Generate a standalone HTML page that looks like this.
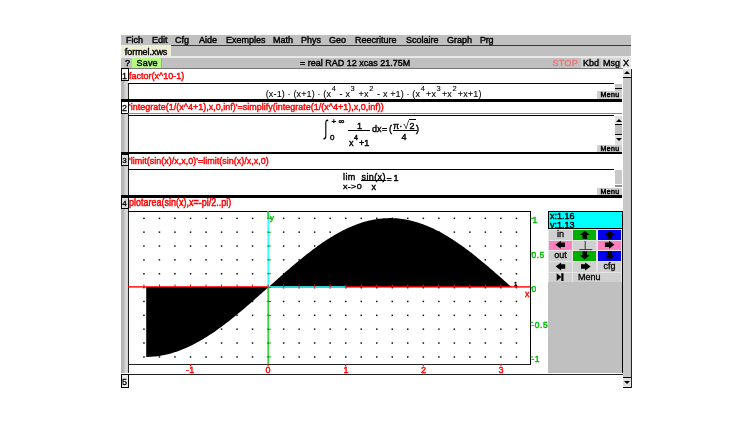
<!DOCTYPE html>
<html><head><meta charset="utf-8"><title>xcas</title>
<style>
html,body{margin:0;padding:0;background:#fff;}
body{width:752px;height:423px;position:relative;overflow:hidden;filter:blur(0.3px);font-family:"Liberation Sans",sans-serif;font-size:9px;line-height:10px;color:#000;}
.abs{position:absolute;}
.t{position:absolute;white-space:nowrap;line-height:10px;transform:translateY(0.5px) scaleY(1.03);transform-origin:0 50%;-webkit-text-stroke:0.42px;}
.r{color:#f00;}
.g{color:#0b0;}
.b{position:absolute;background:#000;}
.gr{position:absolute;background:#c0c0c0;}
.lg{position:absolute;background:#d4d4d4;}
.w{position:absolute;background:#fff;}
.num{position:absolute;left:121px;width:6px;border:1px solid #000;background:#fff;font-size:9px;text-align:center;line-height:12px;-webkit-text-stroke:0.3px;overflow:hidden;text-indent:-1px}
.menu{position:absolute;left:597px;width:25px;height:8px;background:#d0d0d0;font-size:7px;line-height:8.5px;text-align:center;-webkit-text-stroke:0.45px;letter-spacing:0.4px;text-indent:1px}
.btn{position:absolute;height:9.5px;width:23px;text-align:center;line-height:9.5px;font-size:9px;-webkit-text-stroke:0.3px;}
.n{transform:none;}
.m{font-size:9px;}
sup{font-size:7.5px;line-height:0;vertical-align:6px;margin:0 1px 0 0.5px;}
.m{-webkit-text-stroke:0.1px;}
</style></head><body>
<!-- window background -->
<div class="gr" style="left:121px;top:35px;width:510px;height:353px;background:#fff"></div>
<!-- menubar -->
<div class="gr" style="left:121px;top:35px;width:510px;height:33px"></div>
<div class="t n" style="left:126px;top:35px">Fich</div>
<div class="t n" style="left:152px;top:35px">Edit</div>
<div class="t n" style="left:175px;top:35px">Cfg</div>
<div class="t n" style="left:199px;top:35px">Aide</div>
<div class="t n" style="left:226px;top:35px">Exemples</div>
<div class="t n" style="left:273px;top:35px">Math</div>
<div class="t n" style="left:301px;top:35px">Phys</div>
<div class="t n" style="left:329px;top:35px">Geo</div>
<div class="t n" style="left:355px;top:35px">Reecriture</div>
<div class="t n" style="left:406px;top:35px">Scolaire</div>
<div class="t n" style="left:447px;top:35px">Graph</div>
<div class="t n" style="left:480px;top:35px;letter-spacing:-0.3px">Prg</div>
<div class="b" style="left:171px;top:45px;width:460px;height:1.3px;background:#383838"></div>
<!-- tab -->
<div class="abs" style="left:121px;top:45px;width:50px;height:12px;background:#eeeed4"></div>
<div class="t n" style="left:124.8px;top:46.8px;letter-spacing:-0.05px">formel.xws</div>
<div class="abs" style="left:121px;top:56.3px;width:510px;height:1.4px;background:#e8e8e8"></div>
<!-- toolbar -->
<div class="t n" style="left:125px;top:57.8px">?</div>
<div class="abs" style="left:131.5px;top:58px;width:30px;height:10px;background:#a9a4b0"></div><div class="abs" style="left:132px;top:58px;width:29px;height:10px;background:#b4fa80"></div>
<div class="t n" style="left:136.5px;top:57.8px;letter-spacing:0.2px">Save</div>
<div class="t n" style="left:300px;top:57.8px">= real RAD 12 xcas 21.75M</div>
<div class="t n" style="left:552.5px;top:57.8px;color:#ee7777;letter-spacing:0.3px">STOP</div>
<div class="lg" style="left:581px;top:58px;width:18px;height:10px"></div>
<div class="t n" style="left:583px;top:57.8px">Kbd</div>
<div class="lg" style="left:601px;top:58px;width:19px;height:10px"></div>
<div class="t n" style="left:603px;top:57.8px">Msg</div>
<div class="lg" style="left:621px;top:58px;width:10px;height:10px;background:#e8e8e8"></div>
<div class="t n" style="left:623px;top:57.8px">X</div>
<div class="b" style="left:121px;top:68px;width:502px;height:1px;background:#777"></div>

<!-- left gray strip -->
<div class="gr" style="left:121px;top:69px;width:7px;height:304px;background:linear-gradient(to right,#b4b4b4 0,#b8b8b8 2.5px,#d6d6d6 4.5px,#d6d6d6 7px)"></div>
<div class="b" style="left:127.6px;top:83px;width:1.3px;height:290px;background:#222"></div>

<!-- main scrollbar -->
<div class="gr" style="left:623px;top:69px;width:8px;height:319px;background:#c8c8c8"></div>
<div class="b" style="left:630.5px;top:69px;width:1px;height:319px;background:#222"></div>
<div class="abs" style="left:623px;top:69px;width:8px;height:8px;background:#e0e0e0"></div>
<div class="abs" style="left:624px;top:71px;width:0;height:0;border-left:3px solid transparent;border-right:3px solid transparent;border-bottom:3px solid #000"></div>
<div class="b" style="left:623px;top:77px;width:8px;height:1px"></div>
<div class="abs" style="left:623px;top:378px;width:8px;height:10px;background:#e0e0e0"></div>
<div class="b" style="left:623px;top:377px;width:8px;height:1px"></div>
<div class="abs" style="left:624px;top:381px;width:0;height:0;border-left:3px solid transparent;border-right:3px solid transparent;border-top:3px solid #000"></div>
<div class="b" style="left:623px;top:387px;width:8px;height:1px"></div>

<!-- row 1 -->
<div class="num" style="top:68px;height:10.5px;line-height:14px">1</div>
<div class="t r" style="left:129px;top:70px">factor(x^10-1)</div>
<div class="b" style="left:128px;top:83px;width:486px;height:1px"></div>
<div class="abs" style="left:129px;top:84px;width:486px;height:15px;overflow:hidden"><div class="t n m" id="f1" style="left:136.7px;top:5.4px;letter-spacing:0.15px">(x-1) · (x+1) · (x<sup>4</sup> - x<sup>3</sup> +x<sup>2</sup> - x +1) · (x<sup>4</sup>+x<sup>3</sup>+x<sup>2</sup>+x+1)</div></div>
<div class="gr" style="left:615px;top:84px;width:7px;height:7px;background:#c8c8c8"></div>
<div class="b" style="left:615px;top:87.7px;width:7px;height:1.4px"></div>
<div class="menu" style="top:91.3px">Menu</div>
<div class="b" style="left:121px;top:99px;width:501px;height:3px"></div>

<!-- row 2 -->
<div class="num" style="top:101px;height:10.5px">2</div>
<div class="t r" style="left:129px;top:101.3px">'integrate(1/(x^4+1),x,0,inf)'=simplify(integrate(1/(x^4+1),x,0,inf))</div>
<div class="b" style="left:128px;top:113px;width:494px;height:1px;background:#888"></div>
<div class="b" style="left:128px;top:115px;width:486px;height:1px"></div>
<!-- formula 2 -->
<div class="t n" style="left:324px;top:116px;font-size:21px;line-height:24px;transform:scaleX(0.62);transform-origin:0 0;-webkit-text-stroke:0">∫</div>
<div class="t n" style="left:331.5px;top:117.3px;font-size:8px">+ ∞</div>
<div class="t n" style="left:330px;top:133px;font-size:8px">0</div>
<div class="t n" style="left:357px;top:121px">1</div>
<div class="b" style="left:348px;top:130px;width:22px;height:1px"></div>
<div class="t n" style="left:349px;top:137.5px">x<sup style="vertical-align:6.3px;font-size:7px">4</sup>+1</div>
<div class="t n" style="left:372px;top:124px">dx</div>
<div class="t n" style="left:382px;top:124px">=</div>
<div class="t n" style="left:389px;top:124px">(</div>
<div class="t n" style="left:393px;top:121px">π·</div>
<div class="t n" style="left:403px;top:119px;font-size:11px;line-height:12px;-webkit-text-stroke:0">√</div>
<div class="t n" style="left:409.5px;top:121px">2</div>
<div class="b" style="left:408.5px;top:119px;width:7px;height:1px"></div>
<div class="b" style="left:393px;top:130px;width:23.5px;height:1px"></div>
<div class="t n" style="left:401.5px;top:132px">4</div>
<div class="t n" style="left:416px;top:124px">)</div>
<!-- row2 scrollbar -->
<div class="gr" style="left:615px;top:116px;width:7px;height:29px;background:#e0e0e0"></div>
<div class="abs" style="left:616px;top:119px;width:0;height:0;border-left:3px solid transparent;border-right:3px solid transparent;border-bottom:3px solid #000"></div>
<div class="b" style="left:615px;top:124px;width:7px;height:1px"></div>
<div class="gr" style="left:615px;top:125px;width:7px;height:9px"></div>
<div class="b" style="left:615px;top:134px;width:7px;height:1px"></div>
<div class="abs" style="left:616px;top:138px;width:0;height:0;border-left:3px solid transparent;border-right:3px solid transparent;border-top:3px solid #000"></div>
<div class="menu" style="top:145px">Menu</div>
<div class="b" style="left:121px;top:152px;width:501px;height:2px"></div>

<!-- row 3 -->
<div class="num" style="top:153.5px;height:10.5px;background:#ddd;font-size:8px">3</div>
<div class="t r" style="left:129px;top:154.6px">'limit(sin(x)/x,x,0)'=limit(sin(x)/x,x,0)</div>
<div class="b" style="left:128px;top:169px;width:486px;height:1px"></div>
<div class="t n" style="left:343px;top:171.5px;letter-spacing:0.4px">lim</div>
<div class="t n" style="left:343px;top:181px;font-size:9px;transform:scaleY(0.85);letter-spacing:0.3px">x-&gt;0</div>
<div class="t n" style="left:361.5px;top:171.5px;letter-spacing:0.4px">sin(x)</div>
<div class="b" style="left:361px;top:179.5px;width:24.5px;height:1px"></div>
<div class="t n" style="left:371.5px;top:181.5px">x</div>
<div class="t n" style="left:386.5px;top:174px">=</div>
<div class="t n" style="left:393.5px;top:173px">1</div>
<div class="gr" style="left:615px;top:170px;width:7px;height:14px;background:#c8c8c8"></div><div class="gr" style="left:615px;top:184.5px;width:7px;height:2px;background:#909090"></div>
<div class="menu" style="top:188px">Menu</div>
<div class="b" style="left:121px;top:195px;width:501px;height:3px"></div>

<!-- row 4 -->
<div class="num" style="top:196.5px;height:10.5px;background:#ddd;font-size:8px">4</div>
<div class="t r" style="left:129px;top:198.3px;transform:scaleY(1.13)">plotarea(sin(x),x=-pi/2..pi)</div>
<div class="b" style="left:128px;top:211px;width:403px;height:1px"></div>
<div class="b" style="left:530px;top:211px;width:1px;height:153px"></div>
<div class="b" style="left:128px;top:363.5px;width:403px;height:1.2px;background:#222"></div>
<svg class="abs" style="left:0;top:0" width="752" height="423" viewBox="0 0 752 423">
<g fill="#111"><rect x="143.2" y="356.2" width="1.5" height="1.5"/><rect x="143.2" y="342.3" width="1.5" height="1.5"/><rect x="143.2" y="328.4" width="1.5" height="1.5"/><rect x="143.2" y="314.6" width="1.5" height="1.5"/><rect x="143.2" y="300.7" width="1.5" height="1.5"/><rect x="143.2" y="286.9" width="1.5" height="1.5"/><rect x="143.2" y="273.0" width="1.5" height="1.5"/><rect x="143.2" y="259.1" width="1.5" height="1.5"/><rect x="143.2" y="245.3" width="1.5" height="1.5"/><rect x="143.2" y="231.4" width="1.5" height="1.5"/><rect x="143.2" y="217.6" width="1.5" height="1.5"/><rect x="158.7" y="356.2" width="1.5" height="1.5"/><rect x="158.7" y="342.3" width="1.5" height="1.5"/><rect x="158.7" y="328.4" width="1.5" height="1.5"/><rect x="158.7" y="314.6" width="1.5" height="1.5"/><rect x="158.7" y="300.7" width="1.5" height="1.5"/><rect x="158.7" y="286.9" width="1.5" height="1.5"/><rect x="158.7" y="273.0" width="1.5" height="1.5"/><rect x="158.7" y="259.1" width="1.5" height="1.5"/><rect x="158.7" y="245.3" width="1.5" height="1.5"/><rect x="158.7" y="231.4" width="1.5" height="1.5"/><rect x="158.7" y="217.6" width="1.5" height="1.5"/><rect x="174.2" y="356.2" width="1.5" height="1.5"/><rect x="174.2" y="342.3" width="1.5" height="1.5"/><rect x="174.2" y="328.4" width="1.5" height="1.5"/><rect x="174.2" y="314.6" width="1.5" height="1.5"/><rect x="174.2" y="300.7" width="1.5" height="1.5"/><rect x="174.2" y="286.9" width="1.5" height="1.5"/><rect x="174.2" y="273.0" width="1.5" height="1.5"/><rect x="174.2" y="259.1" width="1.5" height="1.5"/><rect x="174.2" y="245.3" width="1.5" height="1.5"/><rect x="174.2" y="231.4" width="1.5" height="1.5"/><rect x="174.2" y="217.6" width="1.5" height="1.5"/><rect x="189.8" y="356.2" width="1.5" height="1.5"/><rect x="189.8" y="342.3" width="1.5" height="1.5"/><rect x="189.8" y="328.4" width="1.5" height="1.5"/><rect x="189.8" y="314.6" width="1.5" height="1.5"/><rect x="189.8" y="300.7" width="1.5" height="1.5"/><rect x="189.8" y="286.9" width="1.5" height="1.5"/><rect x="189.8" y="273.0" width="1.5" height="1.5"/><rect x="189.8" y="259.1" width="1.5" height="1.5"/><rect x="189.8" y="245.3" width="1.5" height="1.5"/><rect x="189.8" y="231.4" width="1.5" height="1.5"/><rect x="189.8" y="217.6" width="1.5" height="1.5"/><rect x="205.3" y="356.2" width="1.5" height="1.5"/><rect x="205.3" y="342.3" width="1.5" height="1.5"/><rect x="205.3" y="328.4" width="1.5" height="1.5"/><rect x="205.3" y="314.6" width="1.5" height="1.5"/><rect x="205.3" y="300.7" width="1.5" height="1.5"/><rect x="205.3" y="286.9" width="1.5" height="1.5"/><rect x="205.3" y="273.0" width="1.5" height="1.5"/><rect x="205.3" y="259.1" width="1.5" height="1.5"/><rect x="205.3" y="245.3" width="1.5" height="1.5"/><rect x="205.3" y="231.4" width="1.5" height="1.5"/><rect x="205.3" y="217.6" width="1.5" height="1.5"/><rect x="220.8" y="356.2" width="1.5" height="1.5"/><rect x="220.8" y="342.3" width="1.5" height="1.5"/><rect x="220.8" y="328.4" width="1.5" height="1.5"/><rect x="220.8" y="314.6" width="1.5" height="1.5"/><rect x="220.8" y="300.7" width="1.5" height="1.5"/><rect x="220.8" y="286.9" width="1.5" height="1.5"/><rect x="220.8" y="273.0" width="1.5" height="1.5"/><rect x="220.8" y="259.1" width="1.5" height="1.5"/><rect x="220.8" y="245.3" width="1.5" height="1.5"/><rect x="220.8" y="231.4" width="1.5" height="1.5"/><rect x="220.8" y="217.6" width="1.5" height="1.5"/><rect x="236.3" y="356.2" width="1.5" height="1.5"/><rect x="236.3" y="342.3" width="1.5" height="1.5"/><rect x="236.3" y="328.4" width="1.5" height="1.5"/><rect x="236.3" y="314.6" width="1.5" height="1.5"/><rect x="236.3" y="300.7" width="1.5" height="1.5"/><rect x="236.3" y="286.9" width="1.5" height="1.5"/><rect x="236.3" y="273.0" width="1.5" height="1.5"/><rect x="236.3" y="259.1" width="1.5" height="1.5"/><rect x="236.3" y="245.3" width="1.5" height="1.5"/><rect x="236.3" y="231.4" width="1.5" height="1.5"/><rect x="236.3" y="217.6" width="1.5" height="1.5"/><rect x="251.8" y="356.2" width="1.5" height="1.5"/><rect x="251.8" y="342.3" width="1.5" height="1.5"/><rect x="251.8" y="328.4" width="1.5" height="1.5"/><rect x="251.8" y="314.6" width="1.5" height="1.5"/><rect x="251.8" y="300.7" width="1.5" height="1.5"/><rect x="251.8" y="286.9" width="1.5" height="1.5"/><rect x="251.8" y="273.0" width="1.5" height="1.5"/><rect x="251.8" y="259.1" width="1.5" height="1.5"/><rect x="251.8" y="245.3" width="1.5" height="1.5"/><rect x="251.8" y="231.4" width="1.5" height="1.5"/><rect x="251.8" y="217.6" width="1.5" height="1.5"/><rect x="267.4" y="356.2" width="1.5" height="1.5"/><rect x="267.4" y="342.3" width="1.5" height="1.5"/><rect x="267.4" y="328.4" width="1.5" height="1.5"/><rect x="267.4" y="314.6" width="1.5" height="1.5"/><rect x="267.4" y="300.7" width="1.5" height="1.5"/><rect x="267.4" y="286.9" width="1.5" height="1.5"/><rect x="267.4" y="273.0" width="1.5" height="1.5"/><rect x="267.4" y="259.1" width="1.5" height="1.5"/><rect x="267.4" y="245.3" width="1.5" height="1.5"/><rect x="267.4" y="231.4" width="1.5" height="1.5"/><rect x="267.4" y="217.6" width="1.5" height="1.5"/><rect x="282.9" y="356.2" width="1.5" height="1.5"/><rect x="282.9" y="342.3" width="1.5" height="1.5"/><rect x="282.9" y="328.4" width="1.5" height="1.5"/><rect x="282.9" y="314.6" width="1.5" height="1.5"/><rect x="282.9" y="300.7" width="1.5" height="1.5"/><rect x="282.9" y="286.9" width="1.5" height="1.5"/><rect x="282.9" y="273.0" width="1.5" height="1.5"/><rect x="282.9" y="259.1" width="1.5" height="1.5"/><rect x="282.9" y="245.3" width="1.5" height="1.5"/><rect x="282.9" y="231.4" width="1.5" height="1.5"/><rect x="282.9" y="217.6" width="1.5" height="1.5"/><rect x="298.4" y="356.2" width="1.5" height="1.5"/><rect x="298.4" y="342.3" width="1.5" height="1.5"/><rect x="298.4" y="328.4" width="1.5" height="1.5"/><rect x="298.4" y="314.6" width="1.5" height="1.5"/><rect x="298.4" y="300.7" width="1.5" height="1.5"/><rect x="298.4" y="286.9" width="1.5" height="1.5"/><rect x="298.4" y="273.0" width="1.5" height="1.5"/><rect x="298.4" y="259.1" width="1.5" height="1.5"/><rect x="298.4" y="245.3" width="1.5" height="1.5"/><rect x="298.4" y="231.4" width="1.5" height="1.5"/><rect x="298.4" y="217.6" width="1.5" height="1.5"/><rect x="313.9" y="356.2" width="1.5" height="1.5"/><rect x="313.9" y="342.3" width="1.5" height="1.5"/><rect x="313.9" y="328.4" width="1.5" height="1.5"/><rect x="313.9" y="314.6" width="1.5" height="1.5"/><rect x="313.9" y="300.7" width="1.5" height="1.5"/><rect x="313.9" y="286.9" width="1.5" height="1.5"/><rect x="313.9" y="273.0" width="1.5" height="1.5"/><rect x="313.9" y="259.1" width="1.5" height="1.5"/><rect x="313.9" y="245.3" width="1.5" height="1.5"/><rect x="313.9" y="231.4" width="1.5" height="1.5"/><rect x="313.9" y="217.6" width="1.5" height="1.5"/><rect x="329.4" y="356.2" width="1.5" height="1.5"/><rect x="329.4" y="342.3" width="1.5" height="1.5"/><rect x="329.4" y="328.4" width="1.5" height="1.5"/><rect x="329.4" y="314.6" width="1.5" height="1.5"/><rect x="329.4" y="300.7" width="1.5" height="1.5"/><rect x="329.4" y="286.9" width="1.5" height="1.5"/><rect x="329.4" y="273.0" width="1.5" height="1.5"/><rect x="329.4" y="259.1" width="1.5" height="1.5"/><rect x="329.4" y="245.3" width="1.5" height="1.5"/><rect x="329.4" y="231.4" width="1.5" height="1.5"/><rect x="329.4" y="217.6" width="1.5" height="1.5"/><rect x="345.0" y="356.2" width="1.5" height="1.5"/><rect x="345.0" y="342.3" width="1.5" height="1.5"/><rect x="345.0" y="328.4" width="1.5" height="1.5"/><rect x="345.0" y="314.6" width="1.5" height="1.5"/><rect x="345.0" y="300.7" width="1.5" height="1.5"/><rect x="345.0" y="286.9" width="1.5" height="1.5"/><rect x="345.0" y="273.0" width="1.5" height="1.5"/><rect x="345.0" y="259.1" width="1.5" height="1.5"/><rect x="345.0" y="245.3" width="1.5" height="1.5"/><rect x="345.0" y="231.4" width="1.5" height="1.5"/><rect x="345.0" y="217.6" width="1.5" height="1.5"/><rect x="360.5" y="356.2" width="1.5" height="1.5"/><rect x="360.5" y="342.3" width="1.5" height="1.5"/><rect x="360.5" y="328.4" width="1.5" height="1.5"/><rect x="360.5" y="314.6" width="1.5" height="1.5"/><rect x="360.5" y="300.7" width="1.5" height="1.5"/><rect x="360.5" y="286.9" width="1.5" height="1.5"/><rect x="360.5" y="273.0" width="1.5" height="1.5"/><rect x="360.5" y="259.1" width="1.5" height="1.5"/><rect x="360.5" y="245.3" width="1.5" height="1.5"/><rect x="360.5" y="231.4" width="1.5" height="1.5"/><rect x="360.5" y="217.6" width="1.5" height="1.5"/><rect x="376.0" y="356.2" width="1.5" height="1.5"/><rect x="376.0" y="342.3" width="1.5" height="1.5"/><rect x="376.0" y="328.4" width="1.5" height="1.5"/><rect x="376.0" y="314.6" width="1.5" height="1.5"/><rect x="376.0" y="300.7" width="1.5" height="1.5"/><rect x="376.0" y="286.9" width="1.5" height="1.5"/><rect x="376.0" y="273.0" width="1.5" height="1.5"/><rect x="376.0" y="259.1" width="1.5" height="1.5"/><rect x="376.0" y="245.3" width="1.5" height="1.5"/><rect x="376.0" y="231.4" width="1.5" height="1.5"/><rect x="376.0" y="217.6" width="1.5" height="1.5"/><rect x="391.5" y="356.2" width="1.5" height="1.5"/><rect x="391.5" y="342.3" width="1.5" height="1.5"/><rect x="391.5" y="328.4" width="1.5" height="1.5"/><rect x="391.5" y="314.6" width="1.5" height="1.5"/><rect x="391.5" y="300.7" width="1.5" height="1.5"/><rect x="391.5" y="286.9" width="1.5" height="1.5"/><rect x="391.5" y="273.0" width="1.5" height="1.5"/><rect x="391.5" y="259.1" width="1.5" height="1.5"/><rect x="391.5" y="245.3" width="1.5" height="1.5"/><rect x="391.5" y="231.4" width="1.5" height="1.5"/><rect x="391.5" y="217.6" width="1.5" height="1.5"/><rect x="407.0" y="356.2" width="1.5" height="1.5"/><rect x="407.0" y="342.3" width="1.5" height="1.5"/><rect x="407.0" y="328.4" width="1.5" height="1.5"/><rect x="407.0" y="314.6" width="1.5" height="1.5"/><rect x="407.0" y="300.7" width="1.5" height="1.5"/><rect x="407.0" y="286.9" width="1.5" height="1.5"/><rect x="407.0" y="273.0" width="1.5" height="1.5"/><rect x="407.0" y="259.1" width="1.5" height="1.5"/><rect x="407.0" y="245.3" width="1.5" height="1.5"/><rect x="407.0" y="231.4" width="1.5" height="1.5"/><rect x="407.0" y="217.6" width="1.5" height="1.5"/><rect x="422.6" y="356.2" width="1.5" height="1.5"/><rect x="422.6" y="342.3" width="1.5" height="1.5"/><rect x="422.6" y="328.4" width="1.5" height="1.5"/><rect x="422.6" y="314.6" width="1.5" height="1.5"/><rect x="422.6" y="300.7" width="1.5" height="1.5"/><rect x="422.6" y="286.9" width="1.5" height="1.5"/><rect x="422.6" y="273.0" width="1.5" height="1.5"/><rect x="422.6" y="259.1" width="1.5" height="1.5"/><rect x="422.6" y="245.3" width="1.5" height="1.5"/><rect x="422.6" y="231.4" width="1.5" height="1.5"/><rect x="422.6" y="217.6" width="1.5" height="1.5"/><rect x="438.1" y="356.2" width="1.5" height="1.5"/><rect x="438.1" y="342.3" width="1.5" height="1.5"/><rect x="438.1" y="328.4" width="1.5" height="1.5"/><rect x="438.1" y="314.6" width="1.5" height="1.5"/><rect x="438.1" y="300.7" width="1.5" height="1.5"/><rect x="438.1" y="286.9" width="1.5" height="1.5"/><rect x="438.1" y="273.0" width="1.5" height="1.5"/><rect x="438.1" y="259.1" width="1.5" height="1.5"/><rect x="438.1" y="245.3" width="1.5" height="1.5"/><rect x="438.1" y="231.4" width="1.5" height="1.5"/><rect x="438.1" y="217.6" width="1.5" height="1.5"/><rect x="453.6" y="356.2" width="1.5" height="1.5"/><rect x="453.6" y="342.3" width="1.5" height="1.5"/><rect x="453.6" y="328.4" width="1.5" height="1.5"/><rect x="453.6" y="314.6" width="1.5" height="1.5"/><rect x="453.6" y="300.7" width="1.5" height="1.5"/><rect x="453.6" y="286.9" width="1.5" height="1.5"/><rect x="453.6" y="273.0" width="1.5" height="1.5"/><rect x="453.6" y="259.1" width="1.5" height="1.5"/><rect x="453.6" y="245.3" width="1.5" height="1.5"/><rect x="453.6" y="231.4" width="1.5" height="1.5"/><rect x="453.6" y="217.6" width="1.5" height="1.5"/><rect x="469.1" y="356.2" width="1.5" height="1.5"/><rect x="469.1" y="342.3" width="1.5" height="1.5"/><rect x="469.1" y="328.4" width="1.5" height="1.5"/><rect x="469.1" y="314.6" width="1.5" height="1.5"/><rect x="469.1" y="300.7" width="1.5" height="1.5"/><rect x="469.1" y="286.9" width="1.5" height="1.5"/><rect x="469.1" y="273.0" width="1.5" height="1.5"/><rect x="469.1" y="259.1" width="1.5" height="1.5"/><rect x="469.1" y="245.3" width="1.5" height="1.5"/><rect x="469.1" y="231.4" width="1.5" height="1.5"/><rect x="469.1" y="217.6" width="1.5" height="1.5"/><rect x="484.6" y="356.2" width="1.5" height="1.5"/><rect x="484.6" y="342.3" width="1.5" height="1.5"/><rect x="484.6" y="328.4" width="1.5" height="1.5"/><rect x="484.6" y="314.6" width="1.5" height="1.5"/><rect x="484.6" y="300.7" width="1.5" height="1.5"/><rect x="484.6" y="286.9" width="1.5" height="1.5"/><rect x="484.6" y="273.0" width="1.5" height="1.5"/><rect x="484.6" y="259.1" width="1.5" height="1.5"/><rect x="484.6" y="245.3" width="1.5" height="1.5"/><rect x="484.6" y="231.4" width="1.5" height="1.5"/><rect x="484.6" y="217.6" width="1.5" height="1.5"/><rect x="500.1" y="356.2" width="1.5" height="1.5"/><rect x="500.1" y="342.3" width="1.5" height="1.5"/><rect x="500.1" y="328.4" width="1.5" height="1.5"/><rect x="500.1" y="314.6" width="1.5" height="1.5"/><rect x="500.1" y="300.7" width="1.5" height="1.5"/><rect x="500.1" y="286.9" width="1.5" height="1.5"/><rect x="500.1" y="273.0" width="1.5" height="1.5"/><rect x="500.1" y="259.1" width="1.5" height="1.5"/><rect x="500.1" y="245.3" width="1.5" height="1.5"/><rect x="500.1" y="231.4" width="1.5" height="1.5"/><rect x="500.1" y="217.6" width="1.5" height="1.5"/><rect x="515.7" y="356.2" width="1.5" height="1.5"/><rect x="515.7" y="342.3" width="1.5" height="1.5"/><rect x="515.7" y="328.4" width="1.5" height="1.5"/><rect x="515.7" y="314.6" width="1.5" height="1.5"/><rect x="515.7" y="300.7" width="1.5" height="1.5"/><rect x="515.7" y="286.9" width="1.5" height="1.5"/><rect x="515.7" y="273.0" width="1.5" height="1.5"/><rect x="515.7" y="259.1" width="1.5" height="1.5"/><rect x="515.7" y="245.3" width="1.5" height="1.5"/><rect x="515.7" y="231.4" width="1.5" height="1.5"/><rect x="515.7" y="217.6" width="1.5" height="1.5"/></g>
<path d="M146.21 287.00 L146.21 356.90 L148.03 356.88 L149.86 356.82 L151.69 356.73 L153.52 356.59 L155.35 356.42 L157.18 356.21 L159.01 355.96 L160.83 355.67 L162.66 355.35 L164.49 354.98 L166.32 354.58 L168.15 354.14 L169.98 353.67 L171.80 353.16 L173.63 352.61 L175.46 352.03 L177.29 351.41 L179.12 350.75 L180.95 350.06 L182.77 349.34 L184.60 348.58 L186.43 347.78 L188.26 346.96 L190.09 346.10 L191.92 345.20 L193.74 344.28 L195.57 343.32 L197.40 342.34 L199.23 341.32 L201.06 340.27 L202.89 339.20 L204.72 338.09 L206.54 336.96 L208.37 335.80 L210.20 334.61 L212.03 333.40 L213.86 332.16 L215.69 330.89 L217.51 329.60 L219.34 328.29 L221.17 326.96 L223.00 325.60 L224.83 324.23 L226.66 322.83 L228.48 321.41 L230.31 319.97 L232.14 318.52 L233.97 317.05 L235.80 315.56 L237.63 314.06 L239.45 312.54 L241.28 311.01 L243.11 309.46 L244.94 307.91 L246.77 306.34 L248.60 304.76 L250.43 303.17 L252.25 301.57 L254.08 299.97 L255.91 298.36 L257.74 296.74 L259.57 295.12 L261.40 293.49 L263.22 291.86 L265.05 290.22 L266.88 288.59 L268.71 286.95 L270.54 285.32 L272.37 283.69 L274.19 282.05 L276.02 280.43 L277.85 278.80 L279.68 277.18 L281.51 275.57 L283.34 273.96 L285.17 272.36 L286.99 270.77 L288.82 269.19 L290.65 267.62 L292.48 266.05 L294.31 264.51 L296.14 262.97 L297.96 261.45 L299.79 259.94 L301.62 258.45 L303.45 256.97 L305.28 255.51 L307.11 254.07 L308.93 252.64 L310.76 251.24 L312.59 249.85 L314.42 248.49 L316.25 247.15 L318.08 245.83 L319.90 244.53 L321.73 243.26 L323.56 242.02 L325.39 240.79 L327.22 239.60 L329.05 238.43 L330.88 237.28 L332.70 236.17 L334.53 235.08 L336.36 234.03 L338.19 233.00 L340.02 232.00 L341.85 231.04 L343.67 230.10 L345.50 229.20 L347.33 228.33 L349.16 227.49 L350.99 226.68 L352.82 225.91 L354.64 225.18 L356.47 224.47 L358.30 223.81 L360.13 223.18 L361.96 222.58 L363.79 222.02 L365.62 221.50 L367.44 221.01 L369.27 220.56 L371.10 220.15 L372.93 219.77 L374.76 219.43 L376.59 219.13 L378.41 218.87 L380.24 218.65 L382.07 218.46 L383.90 218.31 L385.73 218.20 L387.56 218.13 L389.38 218.10 L391.21 218.11 L393.04 218.15 L394.87 218.24 L396.70 218.36 L398.53 218.52 L400.35 218.72 L402.18 218.95 L404.01 219.23 L405.84 219.54 L407.67 219.89 L409.50 220.28 L411.33 220.71 L413.15 221.17 L414.98 221.67 L416.81 222.20 L418.64 222.77 L420.47 223.38 L422.30 224.03 L424.12 224.71 L425.95 225.42 L427.78 226.17 L429.61 226.95 L431.44 227.76 L433.27 228.61 L435.09 229.49 L436.92 230.41 L438.75 231.35 L440.58 232.33 L442.41 233.34 L444.24 234.38 L446.06 235.44 L447.89 236.54 L449.72 237.66 L451.55 238.81 L453.38 239.99 L455.21 241.20 L457.04 242.43 L458.86 243.68 L460.69 244.96 L462.52 246.27 L464.35 247.59 L466.18 248.94 L468.01 250.31 L469.83 251.70 L471.66 253.12 L473.49 254.54 L475.32 255.99 L477.15 257.46 L478.98 258.94 L480.80 260.44 L482.63 261.95 L484.46 263.48 L486.29 265.02 L488.12 266.57 L489.95 268.14 L491.78 269.71 L493.60 271.30 L495.43 272.89 L497.26 274.50 L499.09 276.11 L500.92 277.72 L502.75 279.34 L504.57 280.97 L506.40 282.60 L508.23 284.23 L510.06 285.86 L511.89 287.50 L511.89 287.00 Z" fill="#000"/>
<rect x="128" y="286.2" width="402" height="1.4" fill="#f00"/>
<rect x="268.1" y="286.2" width="77.6" height="1.4" fill="#0ff"/>
<rect x="267.5" y="287.0" width="1.3" height="77.0" fill="#0c0"/>
<rect x="267.5" y="211" width="1.3" height="76.0" fill="#0ff"/>
<rect x="267.5" y="211" width="1.3" height="7" fill="#0c0"/>
<g fill="#f00"><rect x="143.4" y="284.5" width="1" height="2.5"/><rect x="159.0" y="284.5" width="1" height="2.5"/><rect x="174.5" y="284.5" width="1" height="2.5"/><rect x="190.0" y="284.5" width="1" height="2.5"/><rect x="205.5" y="284.5" width="1" height="2.5"/><rect x="221.0" y="284.5" width="1" height="2.5"/><rect x="236.6" y="284.5" width="1" height="2.5"/><rect x="252.1" y="284.5" width="1" height="2.5"/><rect x="267.6" y="284.5" width="1" height="2.5"/><rect x="283.1" y="284.5" width="1" height="2.5"/><rect x="298.6" y="284.5" width="1" height="2.5"/><rect x="314.2" y="284.5" width="1" height="2.5"/><rect x="329.7" y="284.5" width="1" height="2.5"/><rect x="345.2" y="284.5" width="1" height="2.5"/><rect x="360.7" y="284.5" width="1" height="2.5"/><rect x="376.2" y="284.5" width="1" height="2.5"/><rect x="391.8" y="284.5" width="1" height="2.5"/><rect x="407.3" y="284.5" width="1" height="2.5"/><rect x="422.8" y="284.5" width="1" height="2.5"/><rect x="438.3" y="284.5" width="1" height="2.5"/><rect x="453.8" y="284.5" width="1" height="2.5"/><rect x="469.4" y="284.5" width="1" height="2.5"/><rect x="484.9" y="284.5" width="1" height="2.5"/><rect x="500.4" y="284.5" width="1" height="2.5"/><rect x="515.9" y="284.5" width="1" height="2.5"/><rect x="190" y="364" width="1" height="2.5"/><rect x="267.6" y="364" width="1" height="2.5"/><rect x="345.2" y="364" width="1" height="2.5"/><rect x="422.8" y="364" width="1" height="2.5"/><rect x="500.4" y="364" width="1" height="2.5"/></g>
<g fill="#0a0"><rect x="268.1" y="356.4" width="3" height="1"/><rect x="268.1" y="342.5" width="3" height="1"/><rect x="268.1" y="328.7" width="3" height="1"/><rect x="268.1" y="314.8" width="3" height="1"/><rect x="268.1" y="301.0" width="3" height="1"/><rect x="268.1" y="287.1" width="3" height="1"/><rect x="268.1" y="273.2" width="3" height="1"/><rect x="268.1" y="259.4" width="3" height="1"/><rect x="268.1" y="245.5" width="3" height="1"/><rect x="268.1" y="231.7" width="3" height="1"/><rect x="268.1" y="217.8" width="3" height="1"/><rect x="530.5" y="217.8" width="2.5" height="1"/><rect x="530.5" y="252.5" width="2.5" height="1"/><rect x="530.5" y="287.1" width="2.5" height="1"/><rect x="530.5" y="321.8" width="2.5" height="1"/><rect x="530.5" y="356.4" width="2.5" height="1"/></g>
</svg>
<div class="t g n" style="left:270px;top:212.5px;font-size:8px">y</div>
<div class="t r" style="left:525px;top:288px">x</div>
<div class="t n" style="left:514px;top:278.5px;color:#000;font-size:6px">1</div>
<div class="t g n" style="left:532.5px;top:215.0px;letter-spacing:0.5px;font-size:8.5px">1</div>
<div class="t g n" style="left:531.5px;top:249.5px;letter-spacing:0.5px;font-size:8.5px">0.5</div>
<div class="t g n" style="left:531.5px;top:284.0px;letter-spacing:0.5px;font-size:8.5px">0</div>
<div class="t g n" style="left:531.5px;top:319.5px;letter-spacing:0.5px;font-size:8.5px">-0.5</div>
<div class="t g n" style="left:531.5px;top:353.5px;letter-spacing:0.5px;font-size:8.5px">-1</div>
<div class="t r n" style="left:186px;top:365px;letter-spacing:0.3px">-1</div>
<div class="t r n" style="left:265.5px;top:365px;letter-spacing:0.3px">0</div>
<div class="t r n" style="left:343.5px;top:365px;letter-spacing:0.3px">1</div>
<div class="t r n" style="left:421px;top:365px;letter-spacing:0.3px">2</div>
<div class="t r n" style="left:498.5px;top:365px;letter-spacing:0.3px">3</div>
<!-- right panel -->
<div class="gr" style="left:548px;top:211px;width:74px;height:162px"></div>
<div class="b" style="left:622px;top:211px;width:1px;height:162px"></div>
<div class="abs" style="left:548px;top:211px;width:74px;height:18px;background:#000"></div>
<div class="abs" style="left:549px;top:212px;width:73px;height:16px;background:#0ff;overflow:hidden"><div class="t n" style="left:1px;top:-1.2px">x:1.16</div><div class="t n" style="left:1px;top:8px">y:1.13</div></div>
<div class="abs" style="left:548px;top:229px;width:74px;height:53px;background:#e4e4e4"></div>
<div class="btn" style="left:549px;top:230px;background:#d0d0d0">in</div>
<div class="btn" style="left:573px;top:230px;background:#00ae00"></div>
<div class="btn" style="left:598px;top:230px;background:#0000f0"></div>
<div class="btn" style="left:549px;top:240.5px;background:#ff80c0"></div>
<div class="btn" style="left:573px;top:240.5px;background:#d0d0d0"></div>
<div class="btn" style="left:598px;top:240.5px;background:#ff80c0"></div>
<div class="btn" style="left:549px;top:251px;background:#d0d0d0">out</div>
<div class="btn" style="left:573px;top:251px;background:#00ae00"></div>
<div class="btn" style="left:598px;top:251px;background:#0000f0"></div>
<div class="btn" style="left:549px;top:262px;background:#d0d0d0"></div>
<div class="btn" style="left:573px;top:262px;background:#d0d0d0"></div>
<div class="btn" style="left:598px;top:262px;background:#d0d0d0">cfg</div>
<div class="btn" style="left:549px;top:272.5px;background:#d0d0d0"></div>
<div class="btn" style="left:573px;top:272.5px;width:48px;background:#d0d0d0;text-align:left;text-indent:5px">Menu</div>
<svg class="abs" style="left:0;top:0" width="752" height="423" viewBox="0 0 752 423"><g fill="#000"><polygon points="584.8,230.8 589.8,235.10000000000002 587.0999999999999,235.10000000000002 587.0999999999999,238.8 582.5,238.8 582.5,235.10000000000002 579.8,235.10000000000002"/><polygon points="609.8,230.8 614.8,235.10000000000002 612.0999999999999,235.10000000000002 612.0999999999999,238.8 607.5,238.8 607.5,235.10000000000002 604.8,235.10000000000002"/><polygon points="555.3,244.7 560.8,240.7 560.8,242.5 564.9,242.5 564.9,246.89999999999998 560.8,246.89999999999998 560.8,248.7"/><polygon points="614.5,244.7 609.0,240.7 609.0,242.5 604.9,242.5 604.9,246.89999999999998 609.0,246.89999999999998 609.0,248.7"/><polygon points="584.8,259.5 589.8,255.2 587.0999999999999,255.2 587.0999999999999,251.5 582.5,251.5 582.5,255.2 579.8,255.2"/><polygon points="609.8,259.5 614.8,255.2 612.0999999999999,255.2 612.0999999999999,251.5 607.5,251.5 607.5,255.2 604.8,255.2"/><polygon points="555.6,266.5 561.1,262.5 561.1,264.3 565.2,264.3 565.2,268.7 561.1,268.7 561.1,270.5"/><polygon points="590.6,266.5 585.1,262.5 585.1,264.3 581.0,264.3 581.0,268.7 585.1,268.7 585.1,270.5"/><polygon points="556.7,273.3 561.3,277.1 561.3,273.3 563.5,273.3 563.5,280.9 561.3,280.9 561.3,277.1 556.7,280.9"/></g><g fill="#333"><rect x="584.7" y="241" width="1" height="8.6"/><rect x="579.3" y="249.1" width="13" height="1"/></g></svg>

<!-- bottom -->
<div class="b" style="left:121px;top:373.5px;width:502px;height:1.2px;background:#222"></div>
<div class="num" style="top:373.5px;height:12px;line-height:15px;background:#eee">5</div>
</body></html>
